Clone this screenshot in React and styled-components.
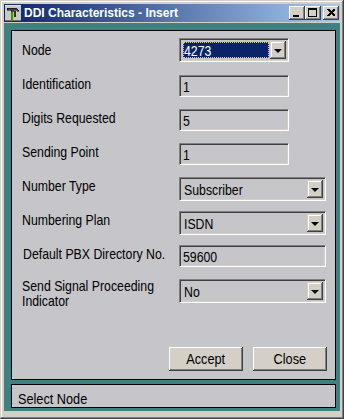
import React from 'react'
import styled, { createGlobalStyle } from 'styled-components'

const GlobalStyle = createGlobalStyle`
  html, body { margin: 0; padding: 0; background: #d4d0c8; }
  body { font-family: "Liberation Sans", Arial, sans-serif; }
  * { box-sizing: border-box; }
`

const Window = styled.div`
  width: 344px;
  height: 419px;
  background: #d4d0c8;
  padding: 4px 4px 8px 4px;
  display: flex;
  flex-direction: column;
  box-shadow: inset -1px -1px #404040, inset 1px 1px #d4d0c8, inset -2px -2px #808080, inset 2px 2px #ffffff;
`

const TitleBar = styled.div`
  height: 18px;
  display: flex;
  align-items: center;
  padding: 0 1px 0 1px;
  background: linear-gradient(to right, #0a246a, #a6caf0);
`

const TitleText = styled.span`
  font-weight: bold;
  font-size: 12px;
  color: #fff;
  margin-left: 3px;
  white-space: nowrap;
`

const Controls = styled.div`
  margin-left: auto;
  display: flex;
`

const CtlButton = styled.div`
  width: 16px;
  height: 14px;
  background: #d4d0c8;
  margin-left: ${p => (p.$gap ? '2px' : '0')};
  box-shadow: inset -1px -1px #404040, inset 1px 1px #ffffff, inset -2px -2px #808080, inset 2px 2px #d4d0c8;
  svg { display: block; }
`

const Client = styled.div`
  flex: 1;
  margin-top: 1px;
  background: #408080;
  padding: 7px 4px 3px 7px;
  display: flex;
  flex-direction: column;
  gap: 4px;
`

const Panel = styled.div`
  flex: 1;
  border: 1px solid #000;
  background: #c6c5ca;
  display: flex;
  flex-direction: column;
  padding: 5px 8px 8px 10px;
`

const Row = styled.div`
  height: 34px;
  display: flex;
  align-items: flex-start;
`

/* the dialog font is a narrow helvetica: draw 15px text squeezed to 82% */
const Narrow = styled.span`
  display: inline-block;
  white-space: ${p => (p.$wrap ? 'normal' : 'nowrap')};
  width: ${p => (p.$w ? `${p.$w}px` : 'auto')};
  transform: scaleX(0.82);
  transform-origin: ${p => p.$origin || 'left'} top;
`

const Label = styled.div`
  width: 157px;
  padding-top: ${p => p.$pt ?? 6}px;
  padding-left: ${p => p.$pl ?? 0}px;
  font-size: 15px;
  line-height: 15px;
  color: #000;
`

const sunken = `
  border: 1px solid;
  border-color: #808080 #ffffff #ffffff #808080;
  box-shadow: inset 1px 1px #404040, inset -1px -1px #d4d0c8;
`

const Input = styled.div`
  ${sunken}
  width: ${p => p.$w}px;
  height: 22px;
  margin-top: 5px;
  background: #c6c5ca;
  padding: 3px 0 0 3px;
  font-size: 15px;
  line-height: 15px;
  color: #000;
  overflow: hidden;
`

const Combo = styled.div`
  ${sunken}
  width: ${p => p.$w}px;
  height: 24px;
  margin-top: ${p => p.$top ?? 5}px;
  background: #c6c5ca;
  padding: 2px;
  display: flex;
`

const ComboValue = styled.div`
  flex: 1;
  margin: 1px;
  padding: 1px 0 0 1px;
  font-size: 15px;
  line-height: 15px;
  overflow: hidden;
  color: ${p => (p.$focus ? '#fff' : '#000')};
  background: ${p => (p.$focus ? '#0a246a' : 'transparent')};
  outline: ${p => (p.$focus ? '1px dotted #e8d060' : 'none')};
  outline-offset: -1px;
`

const ArrowButton = styled.div`
  width: 16px;
  background: #d4d0c8;
  display: flex;
  align-items: center;
  justify-content: center;
  box-shadow: inset -1px -1px #404040, inset 1px 1px #d4d0c8, inset -2px -2px #808080, inset 2px 2px #ffffff;
  &::after {
    content: '';
    border-left: 4px solid transparent;
    border-right: 4px solid transparent;
    border-top: 4px solid #000;
    margin-top: 1px;
  }
`

const ButtonBar = styled.div`
  margin-top: auto;
  display: flex;
  justify-content: flex-end;
  gap: 10px;
`

const Button = styled.div`
  width: 74px;
  height: 24px;
  background: #d4d0c8;
  display: flex;
  align-items: center;
  justify-content: center;
  font-size: 15.5px;
  color: #000;
  box-shadow: inset -1px -1px #404040, inset 1px 1px #ffffff, inset -2px -2px #808080, inset 2px 2px #d4d0c8;
`

const StatusBar = styled.div`
  height: 24px;
  border: 1px solid #000;
  background: #c6c5ca;
  padding: 6px 0 0 6px;
  font-size: 15.5px;
  line-height: 16px;
  color: #000;
`

const AppIcon = () => (
  <svg width="16" height="16" viewBox="0 0 16 16" shapeRendering="crispEdges">
    <rect x="0" y="0" width="16" height="16" fill="#c8c8c8" />
    <rect x="0" y="0" width="16" height="1" fill="#e8e8e8" />
    <rect x="0" y="15" width="16" height="1" fill="#707070" />
    <path d="M2 3 H11 L14 6 H12 L11 5 H8 V7 H6 V5 H2 Z" fill="#404040" stroke="#000" strokeWidth="0.5" />
    <rect x="6" y="7" width="2" height="8" fill="#20a020" />
    <rect x="8" y="7" width="1" height="8" fill="#d8d020" />
    <rect x="9" y="6" width="2" height="6" fill="#303030" />
  </svg>
)

const MinGlyph = () => (
  <svg width="16" height="14" viewBox="0 0 16 14" shapeRendering="crispEdges">
    <rect x="4" y="9" width="6" height="2" fill="#000" />
  </svg>
)

const MaxGlyph = () => (
  <svg width="16" height="14" viewBox="0 0 16 14" shapeRendering="crispEdges">
    <rect x="3" y="2" width="9" height="2" fill="#000" />
    <rect x="3" y="2" width="1" height="9" fill="#000" />
    <rect x="11" y="2" width="1" height="9" fill="#000" />
    <rect x="3" y="10" width="9" height="1" fill="#000" />
  </svg>
)

const CloseGlyph = () => (
  <svg width="16" height="14" viewBox="0 0 16 14" shapeRendering="crispEdges">
    <path d="M4 3h2l2 2 2-2h2v1l-2.5 2.5 2.5 2.5v1h-2l-2-2-2 2h-2v-1l2.5-2.5-2.5-2.5z" fill="#000" />
  </svg>
)

const rows = [
  { label: 'Node', kind: 'combo', value: '4273', w: 110, focus: true, top: 2 },
  { label: 'Identification', kind: 'input', value: '1', w: 110 },
  { label: 'Digits Requested', kind: 'input', value: '5', w: 110 },
  { label: 'Sending Point', kind: 'input', value: '1', w: 110 },
  { label: 'Number Type', kind: 'combo', value: 'Subscriber', w: 147 },
  { label: 'Numbering Plan', kind: 'combo', value: 'ISDN', w: 147 },
  { label: 'Default PBX Directory No.', kind: 'input', value: '59600', w: 147, pl: 1 },
  { label: 'Send Signal Proceeding Indicator', kind: 'combo', value: 'No', w: 147, pt: 4 },
]

export default function App() {
  return (
    <>
      <GlobalStyle />
      <Window>
        <TitleBar>
          <AppIcon />
          <TitleText>DDI Characteristics - Insert</TitleText>
          <Controls>
            <CtlButton><MinGlyph /></CtlButton>
            <CtlButton><MaxGlyph /></CtlButton>
            <CtlButton $gap><CloseGlyph /></CtlButton>
          </Controls>
        </TitleBar>
        <Client>
          <Panel>
            {rows.map(r => (
              <Row key={r.label}>
                <Label $pt={r.pt} $pl={r.pl}>
                  <Narrow $wrap $w={180}>{r.label}</Narrow>
                </Label>
                {r.kind === 'combo' ? (
                  <Combo $w={r.w} $top={r.top}>
                    <ComboValue $focus={r.focus}><Narrow>{r.value}</Narrow></ComboValue>
                    <ArrowButton />
                  </Combo>
                ) : (
                  <Input $w={r.w}><Narrow>{r.value}</Narrow></Input>
                )}
              </Row>
            ))}
            <ButtonBar>
              <Button><Narrow $origin="center">Accept</Narrow></Button>
              <Button><Narrow $origin="center">Close</Narrow></Button>
            </ButtonBar>
          </Panel>
          <StatusBar><Narrow>Select Node</Narrow></StatusBar>
        </Client>
      </Window>
    </>
  )
}
